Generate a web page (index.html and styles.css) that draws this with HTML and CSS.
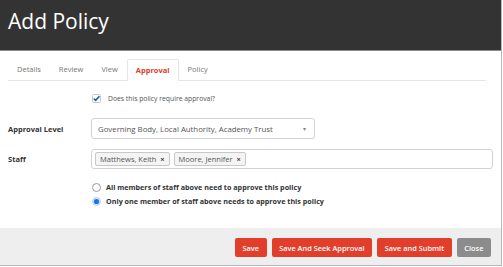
FILE: index.html
```html
<!DOCTYPE html>
<html lang="en">
<head>
    <meta charset="UTF-8">
    <meta name="viewport" content="width=device-width, initial-scale=1.0">
    <title>Add Policy</title>
    <link rel="stylesheet" href="styles.css">
</head>
<body>
    <div class="modal">
        <div class="modal-header">
            <h1>Add Policy</h1>
        </div>

        <div class="modal-body">
            <ul class="tabs">
                <li class="tab">Details</li>
                <li class="tab">Review</li>
                <li class="tab">View</li>
                <li class="tab active">Approval</li>
                <li class="tab">Policy</li>
            </ul>

            <div class="tab-content">
                <div class="form-row row-check">
                    <div class="form-label"></div>
                    <label class="check">
                        <svg width="9" height="9" viewBox="0 0 9 9">
                            <rect x="0.5" y="0.5" width="8" height="8" rx="1" fill="#fff" stroke="#c8c8c8"/>
                            <path d="M1.8 4.6 L3.7 6.4 L7.4 2.2" fill="none" stroke="#1c5fa8" stroke-width="1.6"/>
                        </svg>
                        <span>Does this policy require approval?</span>
                    </label>
                </div>

                <div class="form-row row-select">
                    <div class="form-label">Approval Level</div>
                    <div class="select">
                        <span>Governing Body, Local Authority, Academy Trust</span>
                        <span class="caret">&#9662;</span>
                    </div>
                </div>

                <div class="form-row row-staff">
                    <div class="form-label">Staff</div>
                    <div class="tag-input">
                        <span class="tag">Matthews, Keith <b>&times;</b></span>
                        <span class="tag">Moore, Jennifer <b>&times;</b></span>
                    </div>
                </div>

                <div class="form-row row-radio">
                    <div class="form-label"></div>
                    <label class="radio">
                        <svg width="9" height="9" viewBox="0 0 9 9">
                            <circle cx="4.5" cy="4.5" r="4" fill="#fff" stroke="#9a9a9a"/>
                        </svg>
                        <span>All members of staff above need to approve this policy</span>
                    </label>
                </div>

                <div class="form-row row-radio">
                    <div class="form-label"></div>
                    <label class="radio">
                        <svg width="9" height="9" viewBox="0 0 9 9">
                            <circle cx="4.5" cy="4.5" r="4" fill="#d6e6fa" stroke="#bcd3f0"/>
                            <circle cx="4.5" cy="4.5" r="2.6" fill="#1a73e8"/>
                        </svg>
                        <span>Only one member of staff above needs to approve this policy</span>
                    </label>
                </div>
            </div>
        </div>

        <div class="modal-footer">
            <button class="btn btn-red">Save</button>
            <button class="btn btn-red">Save And Seek Approval</button>
            <button class="btn btn-red">Save and Submit</button>
            <button class="btn btn-grey">Close</button>
        </div>
    </div>
</body>
</html>
```

FILE: styles.css
```css
* {
    margin: 0;
    padding: 0;
    box-sizing: border-box;
}

body {
    font-family: 'Open Sans', 'Liberation Sans', sans-serif;
    background: #fff;
    color: #333;
}

.modal {
    width: 502px;
    height: 266px;
    border-right: 1px solid #b8b8b8;
    border-bottom: 1px solid #b8b8b8;
    display: flex;
    flex-direction: column;
}

.modal-header {
    background: #333;
    height: 51px;
    border-bottom: 1px solid #8a8a8a;
    padding: 7px 8px 0;
}

.modal-header h1 {
    color: #fff;
    font-weight: normal;
    font-size: 21px;
}

.modal-body {
    flex: 1;
    padding: 0 8px;
}

.tabs {
    list-style: none;
    display: flex;
    margin-top: 8px;
    margin-right: 7px;
    height: 22px;
    border-bottom: 1px solid #e6e6e6;
}

.tab {
    font-size: 7.5px;
    color: #777;
    padding: 0 9px;
    line-height: 21px;
}

.tab.active {
    color: #d9402b;
    font-weight: bold;
    padding: 0 8px;
    line-height: 20px;
    border: 1px solid #e6e6e6;
    border-bottom: none;
    background: #fff;
    height: 22px;
    border-radius: 2px 2px 0 0;
}

.tab-content {
    padding-top: 13px;
}

.form-row {
    display: flex;
    align-items: center;
}

.form-label {
    width: 83px;
    flex-shrink: 0;
    font-size: 7.5px;
    font-weight: bold;
    color: #333;
}

.check,
.radio {
    display: flex;
    align-items: center;
    color: #555;
}

.check {
    font-size: 6.8px;
}

.radio {
    font-size: 7.2px;
}

.check svg {
    margin-left: 1px;
    margin-right: 7px;
}

.radio svg {
    margin-left: 1px;
    margin-right: 5px;
}

.radio span {
    font-weight: bold;
    color: #333;
}

.row-select {
    margin-top: 15px;
}

.select {
    width: 224px;
    height: 21px;
    border: 1px solid #d2d2d2;
    border-radius: 3px;
    padding: 0 8px 0 6px;
    display: flex;
    align-items: center;
    justify-content: space-between;
    font-size: 7.8px;
    color: #555;
}

.caret {
    font-size: 6px;
    color: #888;
}

.row-staff {
    margin-top: 10px;
}

.tag-input {
    flex: 1;
    height: 20px;
    border: 1px solid #d2d2d2;
    border-radius: 3px;
    padding: 0 3px;
    display: flex;
    align-items: center;
    gap: 4px;
}

.tag {
    font-size: 7.5px;
    color: #555;
    background: #f4f4f4;
    border: 1px solid #c8c8c8;
    border-radius: 2px;
    padding: 0 4px;
    height: 14px;
    line-height: 12px;
}

.tag b {
    color: #444;
    margin-left: 2px;
}

.row-radio {
    margin-top: 4px;
    height: 10px;
}

.row-staff + .row-radio {
    margin-top: 13px;
}

.modal-footer {
    background: #eee;
    height: 37px;
    display: flex;
    justify-content: flex-end;
    align-items: flex-start;
    gap: 5px;
    padding: 10px 10px 0;
}

.btn {
    font-family: inherit;
    font-size: 7.4px;
    font-weight: 600;
    color: #fff;
    border: none;
    border-radius: 2px;
    height: 19px;
    padding: 0 7.6px;
}

.btn-red {
    background: #e23e2c;
}

.btn-grey {
    background: #8c8c8c;
}
```
